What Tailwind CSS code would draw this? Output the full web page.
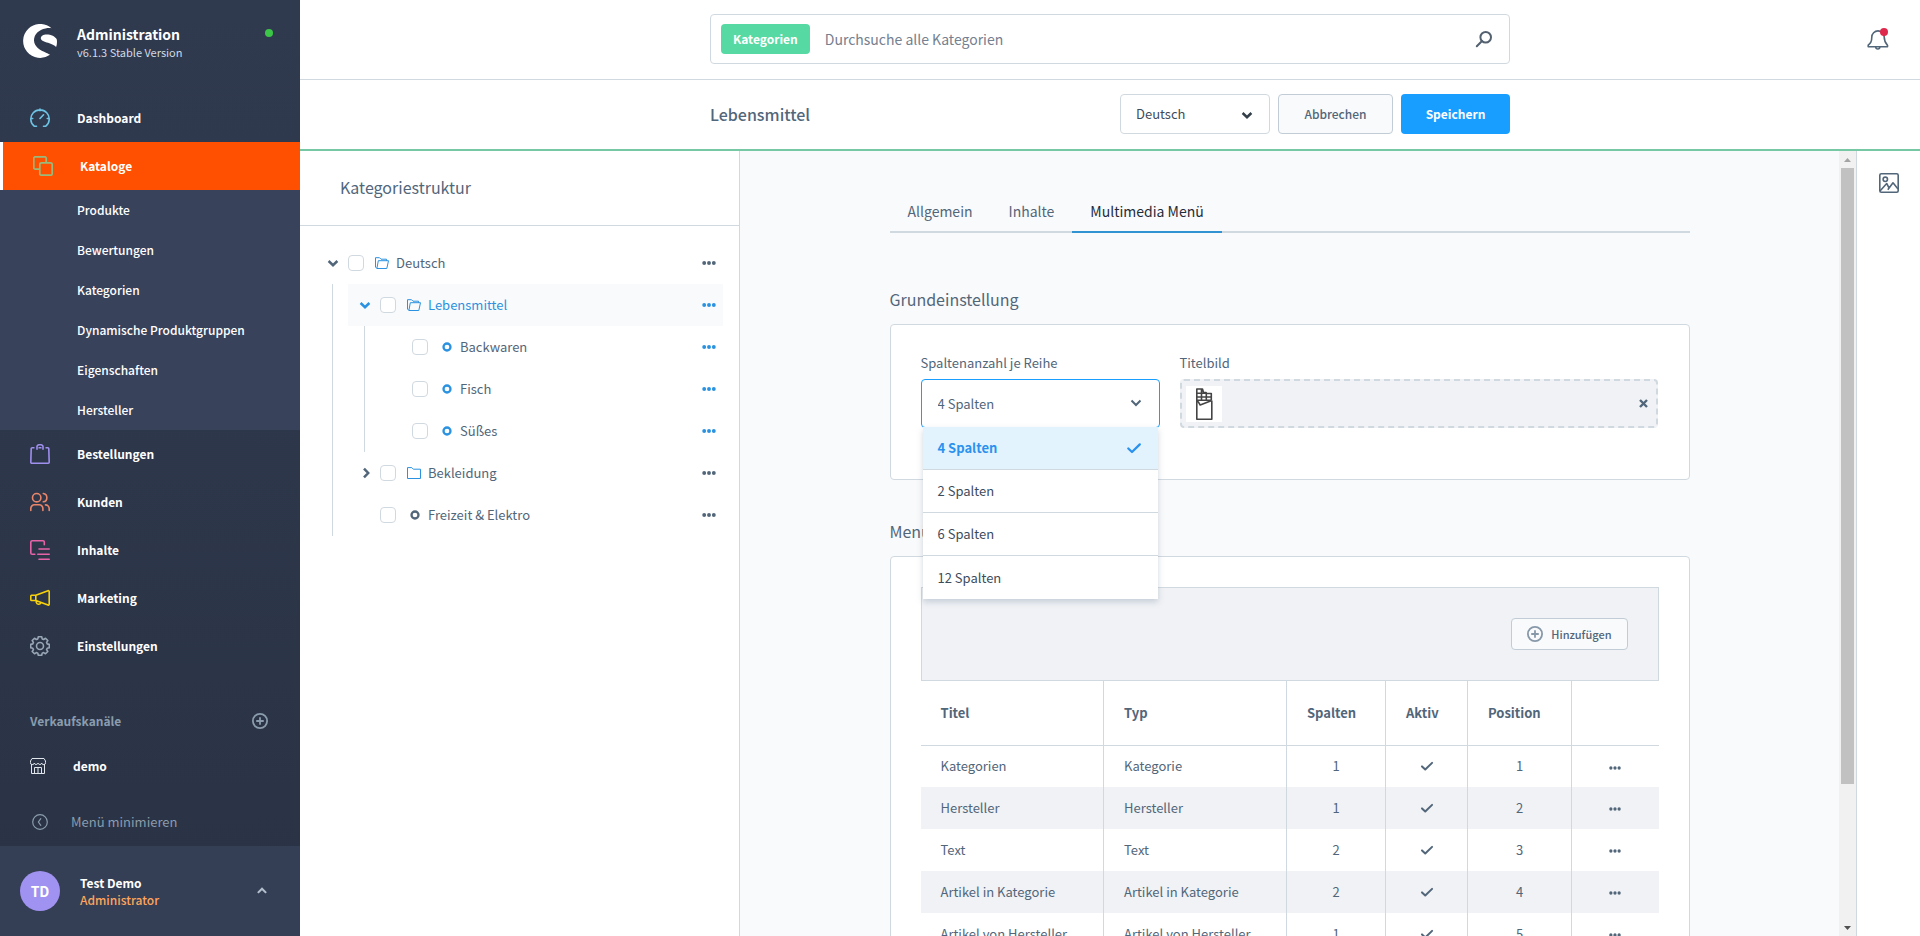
<!DOCTYPE html>
<html lang="de">
<head>
<meta charset="utf-8">
<meta name="viewport" content="width=device-width, initial-scale=1">
<title>Lebensmittel | Kategorien | Administration</title>
<script src="https://cdn.jsdelivr.net/npm/@tailwindcss/browser@4"></script>
</head>
<body class="flex h-screen overflow-hidden bg-white font-['Noto_Sans_CJK_SC',sans-serif] text-[13px] leading-5 text-[#52667a]">

<svg class="hidden" aria-hidden="true">
  <symbol id="dots" viewBox="0 0 16 16"><circle cx="2.500" cy="8" r="2.200"/><circle cx="8" cy="8" r="2.200"/><circle cx="13.500" cy="8" r="2.200"/></symbol>
  <symbol id="chevron" viewBox="0 0 16 16"><path d="M3.600 6 8 10.200 12.400 6" fill="none" stroke="currentColor" stroke-width="2.500"/></symbol>
  <symbol id="check" viewBox="0 0 16 16"><path d="M2.300 8.500 6 12l7.800-7.600" fill="none" stroke="currentColor" stroke-width="2.300" stroke-linecap="round" stroke-linejoin="round"/></symbol>
  <symbol id="plus" viewBox="0 0 16 16"><g fill="none" stroke="currentColor" stroke-width="1.800" stroke-linecap="round"><circle cx="8" cy="8" r="7.100"/><path d="M8 4.900v6.200M4.900 8h6.200"/></g></symbol>
  <symbol id="open" viewBox="0 0 14 12"><g fill="none" stroke="currentColor"><path d="M1.900 11.500.5 10V.7h4l1.500 1.500h5.500v1.500"/><path d="M1.900 11.500 3.300 3.700h10.200l-1.700 7.800z"/></g></symbol>
  <symbol id="closed" viewBox="0 0 14 12"><path d="M.5 11.500V.6h4.300l1.500 1.600h7.200v9.300z" fill="none" stroke="currentColor"/></symbol>
  <symbol id="ring" viewBox="0 0 10 10"><circle cx="5" cy="5" r="3.500" fill="none" stroke="currentColor" stroke-width="2.300"/></symbol>
</svg>

<!-- Sidebar -->
<aside class="flex w-[300px] shrink-0 flex-col bg-linear-to-b from-[#303a4f] to-[#2a3345] text-white">
  <header class="flex h-[94px] items-start pt-6 pr-[27px] pl-[23px]">
    <svg class="size-[34px]" viewBox="0 0 34 34" fill="#fff" aria-hidden="true"><path d="M28.500 4.300A17 17 0 1 0 27 30.800c-.3-.4-1.500-1-3.500-1.900C17 26.400 11 22.600 11 16.300 11 10 16 5.600 22.500 4.400c2.300-.4 4.500-.5 6-.1z"/><path d="M17.800 14.200c0-2.200 2.700-3.700 5.700-3.700 4.500 0 8.700 2 10.300 4.900.4 2.600.2 5.300-.7 7.700-1.500-1.800-4.500-3.200-8-4.300-3.600-1.100-7.300-2.300-7.300-4.600z"/></svg>
    <div class="ml-5 flex-1">
      <h1 class="text-[14px] leading-5 font-bold">Administration</h1>
      <p class="text-[11px] leading-4 text-[#d1d9e0]">v6.1.3 Stable Version</p>
    </div>
    <span class="mt-[5px] size-2 rounded-full bg-[#3cc648]"></span>
  </header>

  <nav class="flex-1 text-[12px] font-bold" aria-label="Hauptmenü">
    <a href="#" class="flex h-12 items-center pl-[30px]">
      <svg class="mr-[27px] size-5 text-[#6ec4e4]" viewBox="0 0 20 20" fill="none" stroke="currentColor" stroke-width="1.600" stroke-linecap="round"><path d="M6.500 18.200H4.200A9.200 9.200 0 1 1 15.800 18.200H13.500M1 10.500h1.700M17.300 10.500H19M10 1v1.700M10 10.500l3.500-3.700"/></svg>Dashboard</a>
    <a href="#" class="flex h-12 items-center border-l-[3px] border-white bg-[#ff4f00] pl-[30px]" aria-current="page">
      <svg class="mr-[27px] size-5 text-[#98ba7c]" viewBox="0 0 20 20" fill="none" stroke="currentColor" stroke-width="1.700"><rect x="6.800" y="6.800" width="12.400" height="12.400" rx="1.500"/><path d="M6.800 13.200H2.300a1.500 1.500 0 0 1-1.500-1.500V2.300A1.500 1.500 0 0 1 2.300.8h9.400a1.500 1.500 0 0 1 1.500 1.500v4.500"/></svg>Kataloge</a>
    <ul class="bg-[#38425b] font-medium">
      <li><a href="#" class="flex h-10 items-center pl-[77px]">Produkte</a></li>
      <li><a href="#" class="flex h-10 items-center pl-[77px]">Bewertungen</a></li>
      <li><a href="#" class="flex h-10 items-center pl-[77px]">Kategorien</a></li>
      <li><a href="#" class="flex h-10 items-center pl-[77px]">Dynamische Produktgruppen</a></li>
      <li><a href="#" class="flex h-10 items-center pl-[77px]">Eigenschaften</a></li>
      <li><a href="#" class="flex h-10 items-center pl-[77px]">Hersteller</a></li>
    </ul>
    <a href="#" class="flex h-12 items-center pl-[30px]">
      <svg class="mr-[27px] size-5 text-[#9f8fee]" viewBox="0 0 20 20" fill="none" stroke="currentColor" stroke-width="1.600" stroke-linejoin="round"><path d="M4.500 3.700H2.200a1 1 0 0 0-1 1L.8 18.200a1 1 0 0 0 1 1h16.400a1 1 0 0 0 1-1l-.4-13.500a1 1 0 0 0-1-1H15.500M8.500 3.700h3M7 5.800V3a2 2 0 0 1 2-2.200h2A2 2 0 0 1 13 3v2.800"/></svg>Bestellungen</a>
    <a href="#" class="flex h-12 items-center pl-[30px]">
      <svg class="mr-[27px] size-5 text-[#e8866a]" viewBox="0 0 20 20" fill="none" stroke="currentColor" stroke-width="1.600" stroke-linecap="round"><circle cx="6.700" cy="5.700" r="4.200"/><path d="M.8 18.500v-2a3.700 3.700 0 0 1 3.700-3.700h4.700a3.700 3.700 0 0 1 3.700 3.700v2M13.300 1.500a4.200 4.200 0 0 1 0 8.300M15.500 12.900a3.700 3.700 0 0 1 3.700 3.700v1.900"/></svg>Kunden</a>
    <a href="#" class="flex h-12 items-center pl-[30px]">
      <svg class="mr-[27px] size-5 text-[#e663a8]" viewBox="0 0 20 20" fill="none" stroke="currentColor" stroke-width="1.600" stroke-linecap="round"><path d="M4.800 14.200H2.100A1.300 1.300 0 0 1 .8 12.900V2A1.300 1.300 0 0 1 2.100.8H13a1.300 1.300 0 0 1 1.300 1.300v2.700M9 9h10.200M7.800 14.200h11.400M9 19.200h10.200"/></svg>Inhalte</a>
    <a href="#" class="flex h-12 items-center pl-[30px]">
      <svg class="mr-[27px] size-5 text-[#f7d20c]" viewBox="0 0 20 20" fill="none" stroke="currentColor" stroke-width="1.600" stroke-linejoin="round"><path d="M5.800 7.300H1.600a.8.800 0 0 0-.8.800v3.600c0 .4.400.8.800.8h4.200zM5.800 7.300 18 2.700a.9.900 0 0 1 1.200.8v12.800a.9.900 0 0 1-1.200.8L5.800 12.500zM6.300 12.700v1.600a2.400 2.400 0 0 0 4.600.4"/></svg>Marketing</a>
    <a href="#" class="flex h-12 items-center pl-[30px]">
      <svg class="mr-[27px] size-5 text-[#98a6b5]" viewBox="0 0 20 20" fill="none" stroke="currentColor" stroke-width="1.600" stroke-linejoin="round"><circle cx="10" cy="10" r="3.500"/><path d="M8.300.8h3.400l.5 2.100 1.400.6 1.900-1.200 2.300 2.300-1.200 1.900.6 1.400 2.100.5v3.300l-2.100.5-.6 1.400 1.200 1.900-2.300 2.300-1.900-1.200-1.400.6-.5 2.100H8.300l-.5-2.100-1.400-.6-1.900 1.200-2.300-2.300 1.200-1.900-.6-1.400-2.100-.5V8.400l2.100-.5.6-1.400-1.200-1.900 2.300-2.300 1.900 1.200 1.400-.6z"/></svg>Einstellungen</a>

    <div class="mt-7 flex h-[46px] items-center justify-between pr-8 pl-[30px] text-[#8a9cad]">
      <h2>Verkaufskanäle</h2>
      <button type="button" aria-label="Verkaufskanal hinzufügen"><svg class="size-4"><use href="#plus"/></svg></button>
    </div>
    <a href="#" class="flex h-11 items-center pl-[30px]">
      <svg class="mr-[27px] size-4 text-[#dfe5ea]" viewBox="0 0 16 16" fill="none" stroke="currentColor"><path d="M1.500 6v9.500h13V6M4.500 15.500v-6h7v6M8 9.500v6M2 .5h12l1.500 2.500v1.500a1.800 1.800 0 0 1-3.700.6 2 2 0 0 1-3.800 0 2 2 0 0 1-3.800 0A1.800 1.800 0 0 1 .5 4.500V3z"/></svg>demo</a>
  </nav>

  <button type="button" class="flex h-12 items-center pl-8 text-left text-[#8a9cad]">
    <svg class="mr-[23px] size-4" viewBox="0 0 16 16" fill="none" stroke="currentColor" stroke-width="1.200" stroke-linecap="round"><circle cx="8" cy="8" r="7.300"/><path d="M8.800 4.700 6.400 8l2.400 3.300"/></svg>Menü minimieren</button>
  <button type="button" class="flex h-[90px] items-center bg-[#343e55] pr-8 pl-5 text-left text-[12px] font-bold">
    <span class="flex size-10 items-center justify-center rounded-full bg-[#a092f0] text-[14px]">TD</span>
    <span class="ml-5 flex-1 leading-[17px]">Test Demo<br><span class="font-medium text-[#ffa55c]">Administrator</span></span>
    <svg class="size-3 rotate-180 text-[#b3bfcc]" viewBox="0 0 16 16"><path d="M2.500 5.500 8 11l5.500-5.500" fill="none" stroke="currentColor" stroke-width="2.800"/></svg>
  </button>
</aside>

<div class="flex min-w-0 flex-1 flex-col">
  <!-- Search -->
  <header class="relative flex h-20 shrink-0 items-start justify-center border-b border-[#d1d9e0] pt-[14px]">
    <form class="flex h-[50px] w-full max-w-[800px] items-center rounded-sm border border-[#d1d9e0] pr-4 pl-[10px]" role="search">
      <span class="flex h-[30px] items-center rounded-sm bg-[#57d9a3] px-3 text-[12px] font-bold text-white">Kategorien</span>
      <input type="search" aria-label="Suche" placeholder="Durchsuche alle Kategorien" class="ml-[15px] min-w-0 flex-1 text-[14px] outline-none placeholder:text-[#758090]">
      <button type="submit" aria-label="Suchen"><svg class="size-[18px] text-[#52606f]" viewBox="0 0 18 18" fill="none" stroke="currentColor" stroke-width="2"><circle cx="10.700" cy="7.200" r="5.300"/><path d="m7 11-5.200 5.200" stroke-linecap="round"/></svg></button>
    </form>
    <button type="button" class="absolute right-[31px] top-7" aria-label="Benachrichtigungen">
      <svg class="size-[22px]" viewBox="0 0 22 22" fill="none" stroke="#52667a" stroke-width="1.600" stroke-linejoin="round"><path d="M1.200 17.200c2.300-2 3.600-3.200 3.600-8.100a6.200 6.200 0 0 1 12.400 0c0 4.900 1.300 6.100 3.300 8.100v1.500H1.200z"/><path d="M8.800 19a2 2 0 0 0 4 0"/><circle cx="17" cy="4" r="4" fill="#de294c" stroke="none"/></svg>
    </button>
  </header>

  <!-- Page bar -->
  <div class="flex h-[71px] shrink-0 items-start justify-center border-b-2 border-[#76c7a3] pt-[14px]">
    <div class="flex w-full max-w-[800px] items-center gap-2">
      <h2 class="flex-1 text-[16px] font-medium">Lebensmittel</h2>
      <div class="relative w-[150px]">
        <select aria-label="Sprache" class="h-10 w-full appearance-none rounded-sm border border-[#d1d9e0] bg-white px-[15px] text-[#3d4c5c]"><option>Deutsch</option></select>
        <svg class="pointer-events-none absolute top-[13px] right-[15px] size-4 text-[#333e49]"><use href="#chevron"/></svg>
      </div>
      <button type="button" class="h-10 w-[115px] rounded-sm border border-[#c2ccd6] bg-[#f9fafb] text-[12px] font-medium">Abbrechen</button>
      <button type="button" class="h-10 w-[109px] rounded-sm bg-[#189eff] text-[12px] font-bold text-white">Speichern</button>
    </div>
  </div>

  <div class="flex min-h-0 flex-1">
    <!-- Category tree -->
    <section class="w-[440px] shrink-0 border-r border-[#d1d9e0]">
      <h3 class="h-[75px] border-b border-[#d1d9e0] pt-[26px] pl-10 text-[16px]">Kategoriestruktur</h3>
      <ul class="pt-4 pr-4 pl-6" role="tree" aria-label="Kategorien">
        <li role="treeitem" aria-expanded="true">
          <div class="flex h-[42px] items-center pr-[7px]">
            <button type="button" class="w-6 pl-px" aria-label="Zuklappen"><svg class="size-4"><use href="#chevron"/></svg></button>
            <input id="c1" type="checkbox" class="size-4 appearance-none rounded-sm border border-[#d1d9e0] bg-white">
            <svg class="mr-[7px] ml-[11px] h-3 w-[14px] text-[#2a92e0]"><use href="#open"/></svg>
            <label for="c1" class="flex-1">Deutsch</label>
            <button type="button" aria-label="Optionen"><svg class="size-[14px]" fill="currentColor"><use href="#dots"/></svg></button>
          </div>
          <ul class="ml-2 border-l border-[#d1d9e0] pl-[15px]" role="group">
            <li role="treeitem" aria-expanded="true">
              <div class="flex h-[42px] items-center bg-[#f9fafb] pr-[7px] pl-2 text-[#2a92e0]">
                <button type="button" class="w-6 pl-px" aria-label="Zuklappen"><svg class="size-4"><use href="#chevron"/></svg></button>
                <input id="c2" type="checkbox" class="size-4 appearance-none rounded-sm border border-[#d1d9e0] bg-white">
                <svg class="mr-[7px] ml-[11px] h-3 w-[14px]"><use href="#open"/></svg>
                <label for="c2" class="flex-1">Lebensmittel</label>
                <button type="button" aria-label="Optionen"><svg class="size-[14px]" fill="currentColor"><use href="#dots"/></svg></button>
              </div>
              <ul class="ml-4 border-l border-[#d1d9e0] pl-[47px]" role="group">
                <li role="treeitem" class="flex h-[42px] items-center pr-[7px]">
                  <input id="c3" type="checkbox" class="size-4 appearance-none rounded-sm border border-[#d1d9e0] bg-white">
                  <svg class="mr-2 ml-[14px] size-[10px] text-[#2a92e0]"><use href="#ring"/></svg>
                  <label for="c3" class="flex-1">Backwaren</label>
                  <button type="button" class="text-[#2a92e0]" aria-label="Optionen"><svg class="size-[14px]" fill="currentColor"><use href="#dots"/></svg></button>
                </li>
                <li role="treeitem" class="flex h-[42px] items-center pr-[7px]">
                  <input id="c4" type="checkbox" class="size-4 appearance-none rounded-sm border border-[#d1d9e0] bg-white">
                  <svg class="mr-2 ml-[14px] size-[10px] text-[#2a92e0]"><use href="#ring"/></svg>
                  <label for="c4" class="flex-1">Fisch</label>
                  <button type="button" class="text-[#2a92e0]" aria-label="Optionen"><svg class="size-[14px]" fill="currentColor"><use href="#dots"/></svg></button>
                </li>
                <li role="treeitem" class="flex h-[42px] items-center pr-[7px]">
                  <input id="c5" type="checkbox" class="size-4 appearance-none rounded-sm border border-[#d1d9e0] bg-white">
                  <svg class="mr-2 ml-[14px] size-[10px] text-[#2a92e0]"><use href="#ring"/></svg>
                  <label for="c5" class="flex-1">Süßes</label>
                  <button type="button" class="text-[#2a92e0]" aria-label="Optionen"><svg class="size-[14px]" fill="currentColor"><use href="#dots"/></svg></button>
                </li>
              </ul>
            </li>
            <li role="treeitem" aria-expanded="false" class="flex h-[42px] items-center pr-[7px] pl-2">
              <button type="button" class="w-6 pl-[2px]" aria-label="Aufklappen"><svg class="size-4 -rotate-90"><use href="#chevron"/></svg></button>
              <input id="c6" type="checkbox" class="size-4 appearance-none rounded-sm border border-[#d1d9e0] bg-white">
              <svg class="mr-[7px] ml-[11px] h-3 w-[14px] text-[#2a92e0]"><use href="#closed"/></svg>
              <label for="c6" class="flex-1">Bekleidung</label>
              <button type="button" aria-label="Optionen"><svg class="size-[14px]" fill="currentColor"><use href="#dots"/></svg></button>
            </li>
            <li role="treeitem" class="flex h-[42px] items-center pr-[7px] pl-8">
              <input id="c7" type="checkbox" class="size-4 appearance-none rounded-sm border border-[#d1d9e0] bg-white">
              <svg class="mr-2 ml-[14px] size-[10px]"><use href="#ring"/></svg>
              <label for="c7" class="flex-1">Freizeit &amp; Elektro</label>
              <button type="button" aria-label="Optionen"><svg class="size-[14px]" fill="currentColor"><use href="#dots"/></svg></button>
            </li>
          </ul>
        </li>
      </ul>
    </section>

    <!-- Detail view -->
    <main class="min-w-0 flex-1 overflow-hidden bg-[#f9fafb] pt-10">
      <div class="mx-auto max-w-[800px]">
        <nav class="flex h-[42px] border-b-2 border-[#d1d9e0] text-[14px]" aria-label="Reiter">
          <a href="#" class="h-[42px] px-[18px] pt-[10px]">Allgemein</a>
          <a href="#" class="h-[42px] px-[18px] pt-[10px]">Inhalte</a>
          <a href="#" class="h-[42px] border-b-2 border-[#3193d2] px-[18px] pt-[10px] text-[#1f2c3a]" aria-current="page">Multimedia Menü</a>
        </nav>

        <h3 class="mt-14 text-[16px] leading-5">Grundeinstellung</h3>
        <section class="mt-[15px] flex h-[156px] gap-5 rounded-sm border border-[#d1d9e0] bg-white pt-7 pr-[31px] pl-[30px]">
          <div class="relative w-[239px]">
            <label for="cols" class="block leading-5">Spaltenanzahl je Reihe</label>
            <select id="cols" class="mt-[6px] h-[49px] w-full appearance-none rounded-sm border border-[#189eff] bg-white px-4"><option>4 Spalten</option><option>2 Spalten</option><option>6 Spalten</option><option>12 Spalten</option></select>
            <svg class="pointer-events-none absolute top-[42px] right-4 size-4" viewBox="0 0 16 16"><path d="M3.500 5.500 8 10l4.500-4.500" fill="none" stroke="currentColor" stroke-width="2"/></svg>
            <ul class="absolute top-[74px] right-[2px] left-[2px] z-10 bg-white text-[#3d4c5c] shadow-[0_3px_6px_rgba(120,140,160,0.35)]" role="listbox" aria-label="Spaltenanzahl je Reihe">
              <li class="flex h-[43px] items-center justify-between border-b border-[#d1d9e0] bg-[#e3f3fd] pr-4 pl-[15px] font-bold text-[#2a92ee]" role="option" aria-selected="true">4 Spalten<svg class="size-4"><use href="#check"/></svg></li>
              <li class="flex h-[43px] items-center border-b border-[#d1d9e0] pl-[15px]" role="option">2 Spalten</li>
              <li class="flex h-[43px] items-center border-b border-[#d1d9e0] pl-[15px]" role="option">6 Spalten</li>
              <li class="flex h-[43px] items-center pl-[15px]" role="option">12 Spalten</li>
            </ul>
          </div>
          <div class="flex-1">
            <p class="leading-5">Titelbild</p>
            <div class="mt-[6px] flex h-[49px] items-center justify-between rounded-sm border-2 border-dashed border-[#d1d9e0] bg-[#f0f2f5] pr-2 pl-1">
              <svg class="size-9 bg-white" viewBox="0 0 36 36" fill="none" stroke="#444" stroke-width="1.600" stroke-linejoin="round" role="img" aria-label="Schokolade"><path d="M10.800 14.500v18.700h15V14.500M10.800 14.500V3h5.700l1 3.500h2.500l.6 1h4.700v6.500M10.800 7.300h9M10.800 11h14.500M15.500 3v11M20.300 7v7.500M10.800 14.200h14.500M10.800 14.500l1.800 1.800 1.600 2.700 11.600-4.500"/></svg>
              <button type="button" aria-label="Bild entfernen"><svg class="size-[9px]" viewBox="0 0 9 9" stroke="currentColor" stroke-width="2.400"><path d="m1 1 7 7M8 1 1 8"/></svg></button>
            </div>
          </div>
        </section>

        <h3 class="mt-[41px] text-[16px] leading-5">Menü</h3>
        <section class="mt-[15px] rounded-sm border border-[#d1d9e0] bg-white p-[30px]">
          <div class="flex h-[94px] items-center justify-end border border-[#d1d9e0] bg-[#f0f2f5] pr-[30px]">
            <button type="button" class="flex h-8 items-center gap-2 rounded-sm border border-[#c2ccd6] bg-[#f9fafb] px-[15px] text-[11px] font-medium"><svg class="size-4 text-[#8798a9]"><use href="#plus"/></svg>Hinzufügen</button>
          </div>
          <table class="w-full table-fixed border-collapse text-center">
            <colgroup><col class="w-[183px]"><col class="w-[183px]"><col class="w-[99px]"><col class="w-[82px]"><col class="w-[104px]"><col></colgroup>
            <thead>
              <tr class="h-16 border-b border-[#d1d9e0] text-left [&>th]:border-r [&>th]:border-[#d1d9e0] [&>th]:pl-5 [&>th:last-child]:border-r-0">
                <th scope="col">Titel</th><th scope="col">Typ</th><th scope="col">Spalten</th><th scope="col">Aktiv</th><th scope="col">Position</th><th scope="col" aria-label="Aktionen"></th>
              </tr>
            </thead>
            <tbody class="[&_td]:h-[42px] [&_td]:border-r [&_td]:border-[#d1d9e0] [&_td:last-child]:border-r-0 [&_td:nth-child(-n+2)]:pl-5 [&_td:nth-child(-n+2)]:text-left [&_tr:nth-child(even)]:bg-[#f0f2f5] [&_svg]:mx-auto [&_svg]:block [&_button]:align-middle">
              <tr><td>Kategorien</td><td>Kategorie</td><td>1</td><td><svg class="size-[14px]"><use href="#check"/></svg></td><td>1</td><td><button type="button" aria-label="Optionen"><svg class="size-3" fill="currentColor"><use href="#dots"/></svg></button></td></tr>
              <tr><td>Hersteller</td><td>Hersteller</td><td>1</td><td><svg class="size-[14px]"><use href="#check"/></svg></td><td>2</td><td><button type="button" aria-label="Optionen"><svg class="size-3" fill="currentColor"><use href="#dots"/></svg></button></td></tr>
              <tr><td>Text</td><td>Text</td><td>2</td><td><svg class="size-[14px]"><use href="#check"/></svg></td><td>3</td><td><button type="button" aria-label="Optionen"><svg class="size-3" fill="currentColor"><use href="#dots"/></svg></button></td></tr>
              <tr><td>Artikel in Kategorie</td><td>Artikel in Kategorie</td><td>2</td><td><svg class="size-[14px]"><use href="#check"/></svg></td><td>4</td><td><button type="button" aria-label="Optionen"><svg class="size-3" fill="currentColor"><use href="#dots"/></svg></button></td></tr>
              <tr><td>Artikel von Hersteller</td><td>Artikel von Hersteller</td><td>1</td><td><svg class="size-[14px]"><use href="#check"/></svg></td><td>5</td><td><button type="button" aria-label="Optionen"><svg class="size-3" fill="currentColor"><use href="#dots"/></svg></button></td></tr>
            </tbody>
          </table>
        </section>
      </div>
    </main>

    <!-- Scrollbar -->
    <div class="flex w-[17px] shrink-0 flex-col items-center bg-[#f1f1f1]" aria-hidden="true">
      <svg class="h-[17px] w-[17px] shrink-0" viewBox="0 0 17 17"><path d="M5 11h7L8.500 7z" fill="#a3a3a3"/></svg>
      <div class="min-h-0 w-[13px] flex-[616] bg-[#c1c1c1]"></div>
      <div class="min-h-0 flex-[135]"></div>
      <svg class="h-[17px] w-[17px] shrink-0" viewBox="0 0 17 17"><path d="M5 7h7l-3.500 4z" fill="#505050"/></svg>
    </div>

    <!-- Right rail -->
    <aside class="flex w-16 shrink-0 justify-center border-l border-[#d1d9e0] pt-[22px]">
      <button type="button" class="size-5" aria-label="Medien">
        <svg class="size-5" viewBox="0 0 20 20" fill="none" stroke="#52667a" stroke-width="1.600" stroke-linejoin="round"><rect x=".8" y=".8" width="18.400" height="18.400" rx="1.500"/><circle cx="6.300" cy="6.300" r="2.200"/><path d="m1 18 6.700-7.500 2.300 4.300M8.800 16.800 14 9.800l5 6.200"/></svg>
      </button>
    </aside>
  </div>
</div>
</body>
</html>
